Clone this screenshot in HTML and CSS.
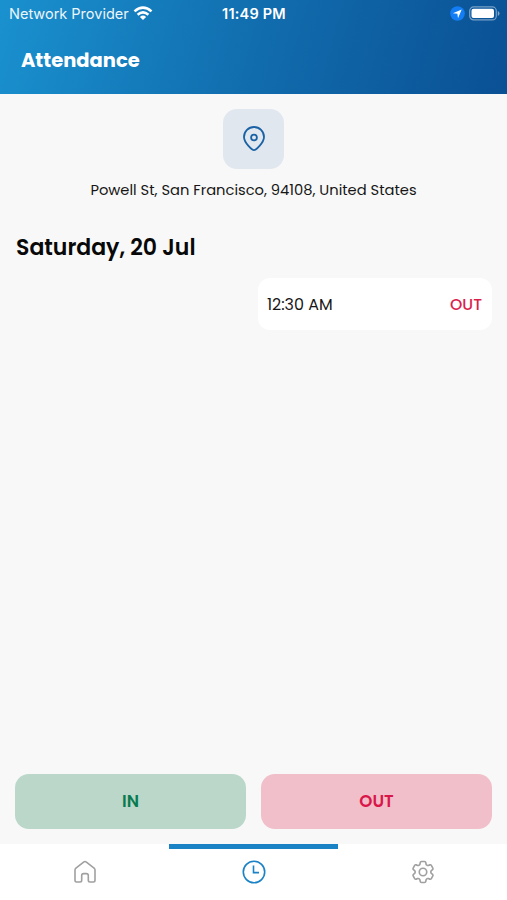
FILE: index.html
```html
<!DOCTYPE html>
<html lang="en">
<head>
<meta charset="utf-8">
<title>Attendance</title>
<link rel="stylesheet" href="styles.css">
</head>
<body>
<div class="app">
  <header class="header">
    <div class="status">
      <div class="carrier"><span class="provider">Network Provider</span>
        <svg width="20" height="15" viewBox="0 0 20 15" fill="none" stroke="#fff" stroke-width="2.6"><path d="M1.5 5.4Q10-2.2 18.500 5.400M4.600 8.700Q10 4.200 15.400 8.700"/><path d="M6.900 10.900Q10 8.300 13.100 10.900L10 14Z" fill="#fff" stroke="none"/></svg>
      </div>
      <span class="clock">11:49 PM</span>
      <div class="indicators">
        <svg width="15" height="15" viewBox="0 0 15 15"><circle cx="7.500" cy="7.500" r="7.300" fill="#137df5"/><path d="M11.700 3.400L2.900 7.300L7.400 7.800L8 12.200Z" fill="#fff"/></svg>
        <svg width="31" height="15" viewBox="0 0 31 15"><rect x=".7" y=".9" width="26.600" height="13" rx="4" fill="none" stroke="#fff" stroke-opacity=".45" stroke-width="1.200"/><rect x="2.500" y="2.700" width="22.500" height="9.400" rx="2" fill="#fff"/><path d="M28.800 5V10Q30.500 9.200 30.500 7.500T28.800 5Z" fill="#fff" opacity=".5"/></svg>
      </div>
    </div>
    <h1 class="title">Attendance</h1>
  </header>
  <main class="main">
    <div class="pin">
      <svg width="24" height="26" viewBox="0 0 24 26" fill="none" stroke="#1b62a5" stroke-width="1.800"><path d="M12 24.200C10.500 24.200 2 17 2 11A10 10 0 0 1 22 11C22 17 13.500 24.200 12 24.200Z"/><circle cx="12" cy="11.500" r="2.900"/></svg>
    </div>
    <p class="address">Powell St, San Francisco, 94108, United States</p>
    <h2 class="date">Saturday, 20 Jul</h2>
    <div class="entry"><span class="entry-time">12:30 AM</span><span class="entry-type">OUT</span></div>
    <div class="actions">
      <button class="action action-in">IN</button>
      <button class="action action-out">OUT</button>
    </div>
  </main>
  <nav class="tabs">
    <a class="tab"><svg width="24" height="24" viewBox="0 0 24 24" fill="none" stroke="#a0a0a0" stroke-width="1.600" stroke-linejoin="round"><path d="M2 10Q2 8.900 2.900 8.100L10.600 2.100Q12 1 13.400 2.100L21.100 8.100Q22 8.900 22 10V20.300Q22 22 20.300 22H17Q15.300 22 15.300 20.300V15.600Q15.300 13.600 13.300 13.600H10.700Q8.700 13.600 8.700 15.600V20.300Q8.700 22 7 22H3.700Q2 22 2 20.300Z"/></svg></a>
    <a class="tab tab-active"><svg width="24" height="24" viewBox="0 0 24 24" fill="none" stroke="#1a83c6" stroke-width="1.600"><circle cx="12" cy="12" r="10.700"/><path d="M11.500 5.500V12.600H17"/></svg></a>
    <a class="tab"><svg width="24" height="24" viewBox="1.700 1.700 20.600 20.600" fill="none" stroke="#a0a0a0" stroke-width="1.400" stroke-linejoin="round"><path d="M9.594 3.940c.09-.542.56-.94 1.110-.94h2.593c.55 0 1.020.398 1.110.94l.213 1.281c.063.374.313.686.645.87.074.04.147.083.22.127.325.196.72.257 1.075.124l1.217-.456a1.125 1.125 0 0 1 1.370.49l1.296 2.247a1.125 1.125 0 0 1-.26 1.431l-1.003.827c-.293.241-.438.613-.43.992a7.723 7.723 0 0 1 0 .255c-.008.378.137.75.43.991l1.004.827c.424.35.534.955.26 1.430l-1.298 2.247a1.125 1.125 0 0 1-1.369.491l-1.217-.456c-.355-.133-.75-.072-1.076.124a6.470 6.470 0 0 1-.22.128c-.331.183-.581.495-.644.869l-.213 1.281c-.09.543-.56.94-1.110.94h-2.594c-.55 0-1.019-.398-1.110-.94l-.213-1.281c-.062-.374-.312-.686-.644-.87a6.520 6.520 0 0 1-.22-.127c-.325-.196-.72-.257-1.076-.124l-1.217.456a1.125 1.125 0 0 1-1.369-.49l-1.297-2.247a1.125 1.125 0 0 1 .26-1.431l1.004-.827c.292-.24.437-.613.43-.991a6.932 6.932 0 0 1 0-.255c.007-.38-.138-.751-.43-.992l-1.004-.827a1.125 1.125 0 0 1-.26-1.430l1.297-2.247a1.125 1.125 0 0 1 1.370-.491l1.216.456c.356.133.751.072 1.076-.124.072-.044.146-.086.22-.128.332-.183.582-.495.644-.869l.214-1.280Z"/><circle cx="12" cy="12" r="3.200"/></svg></a>
  </nav>
</div>
</body>
</html>
```
FILE: styles.css
```css
* { box-sizing: border-box; margin: 0; }
body { font-family: Poppins, Inter, "Liberation Sans", sans-serif; color: #161616; }
svg { display: block; flex: none; }
.app { height: 900px; display: flex; flex-direction: column; background: #f8f8f8; }
.header { height: 94px; background: linear-gradient(105deg, #1a91cf 0%, #116dae 50%, #0a5094 100%); color: #fff; }
.status { height: 27px; padding: 0 7px 0 9px; display: grid; grid-template-columns: 1fr auto 1fr; align-items: center; font-family: Inter, sans-serif; font-size: 14.500px; line-height: 20px; }
.carrier { display: flex; align-items: center; gap: 4px; white-space: nowrap; }
.provider { opacity: .92; }
.clock { margin-right: 1px; font-weight: 600; font-size: 14.500px; letter-spacing: 0.2px; }
.indicators { display: flex; justify-content: flex-end; align-items: center; gap: 4px; }
.title { padding: 19px 21px 0; font-size: 19.500px; line-height: 30px; font-weight: 700; }
.main { flex: 1; padding: 15px 15px; display: flex; flex-direction: column; }
.pin { align-self: center; width: 61px; height: 60px; border-radius: 14px; background: #e1e7ef; display: flex; align-items: center; justify-content: center; }
.address { margin-top: 10px; text-align: center; font-size: 14.700px; line-height: 22px; white-space: nowrap; }
.date { margin-top: 30px; padding-left: 1px; font-size: 22px; line-height: 33px; font-weight: 600; color: #080808; white-space: nowrap; }
.entry { align-self: flex-end; width: 234px; height: 52px; margin-top: 14px; padding: 0 10px 0 9px; border-radius: 12px; background: #fff; display: flex; align-items: center; justify-content: space-between; font-size: 15.900px; }
.entry-type { color: #da1f4d; font-size: 15.700px; font-weight: 500; }
.actions { margin-top: auto; display: grid; grid-template-columns: 1fr 1fr; gap: 15px; }
.action { height: 55px; padding: 0 6px 2px; border: 0; border-radius: 14px; font: 600 16.700px Poppins, Inter, sans-serif; }
.action-in { background: #bad7ca; color: #087b50; }
.action-out { background: #f1bfc9; color: #d9174a; }
.tabs { height: 56px; background: #fff; display: grid; grid-template-columns: repeat(3, 1fr); }
.tab { display: flex; justify-content: center; padding-top: 16px; }
.tab-active { border-top: 5px solid #1a83c6; padding-top: 11px; }
```
